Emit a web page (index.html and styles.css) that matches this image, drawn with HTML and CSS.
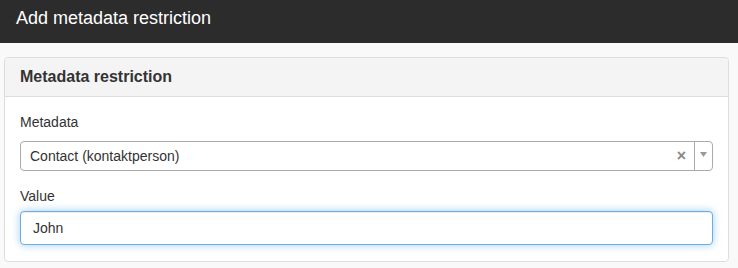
FILE: index.html
```html
<!DOCTYPE html>
<html lang="en">
<head>
  <meta charset="UTF-8">
  <title>Add metadata restriction</title>
  <link rel="stylesheet" href="styles.css">
</head>
<body>
  <div class="topbar">
    <h1>Add metadata restriction</h1>
  </div>

  <div class="content">
    <div class="panel">
      <div class="panel-heading">
        <h2>Metadata restriction</h2>
      </div>
      <div class="panel-body">
        <label class="field-label">Metadata</label>
        <div class="select-box">
          <span class="select-value">Contact (kontaktperson)</span>
          <span class="select-clear">&#215;</span>
          <span class="select-arrow">
            <svg width="7" height="5" viewBox="0 0 7 5"><path d="M0 0h7L3.5 5z" fill="#999"/></svg>
          </span>
        </div>

        <label class="field-label short">Value</label>
        <input class="text-input" type="text" value="John">
      </div>
    </div>
  </div>
</body>
</html>
```

FILE: styles.css
```css
* {
  box-sizing: border-box;
  margin: 0;
  padding: 0;
}

body {
  font-family: "Liberation Sans", Arial, sans-serif;
  background-color: #f9f9f9;
  color: #333;
  font-size: 14px;
}

.topbar {
  background: #2c2c2c;
  height: 43px;
  padding: 0 16px;
  display: flex;
  align-items: center;
}

.topbar h1 {
  color: #fff;
  font-size: 18px;
  font-weight: normal;
  margin-top: -6px;
}

.content {
  padding: 14px 9px 0 4px;
}

.panel {
  background: #fff;
  border: 1px solid #ddd;
  border-radius: 4px;
}

.panel-heading {
  background: #f4f4f4;
  border-bottom: 1px solid #ddd;
  border-radius: 4px 4px 0 0;
  height: 39px;
  padding: 0 15px;
  display: flex;
  align-items: center;
}

.panel-heading h2 {
  font-size: 16px;
  font-weight: bold;
  color: #333;
}

.panel-body {
  padding: 15px 15px 16px;
}

.field-label {
  display: block;
  line-height: 20px;
  margin-bottom: 9px;
}

.field-label.short {
  margin-bottom: 5px;
}

.select-box {
  display: flex;
  align-items: center;
  height: 30px;
  border: 1px solid #aaa;
  border-radius: 4px;
  background: #fff;
  margin-bottom: 15px;
}

.select-value {
  flex: 1;
  padding-left: 9px;
}

.select-clear {
  color: #888;
  font-weight: bold;
  font-size: 16px;
  padding-right: 8px;
}

.select-arrow {
  width: 18px;
  height: 28px;
  border-left: 1px solid #aaa;
  display: flex;
  align-items: center;
  justify-content: center;
  padding-bottom: 3px;
}

.text-input {
  display: block;
  width: 100%;
  height: 34px;
  padding: 0 12px;
  font: inherit;
  color: #333;
  border: 1px solid #66afe9;
  border-radius: 4px;
  outline: none;
  box-shadow: inset 0 1px 1px rgba(0, 0, 0, 0.075), 0 0 8px rgba(102, 175, 233, 0.6);
}
```
